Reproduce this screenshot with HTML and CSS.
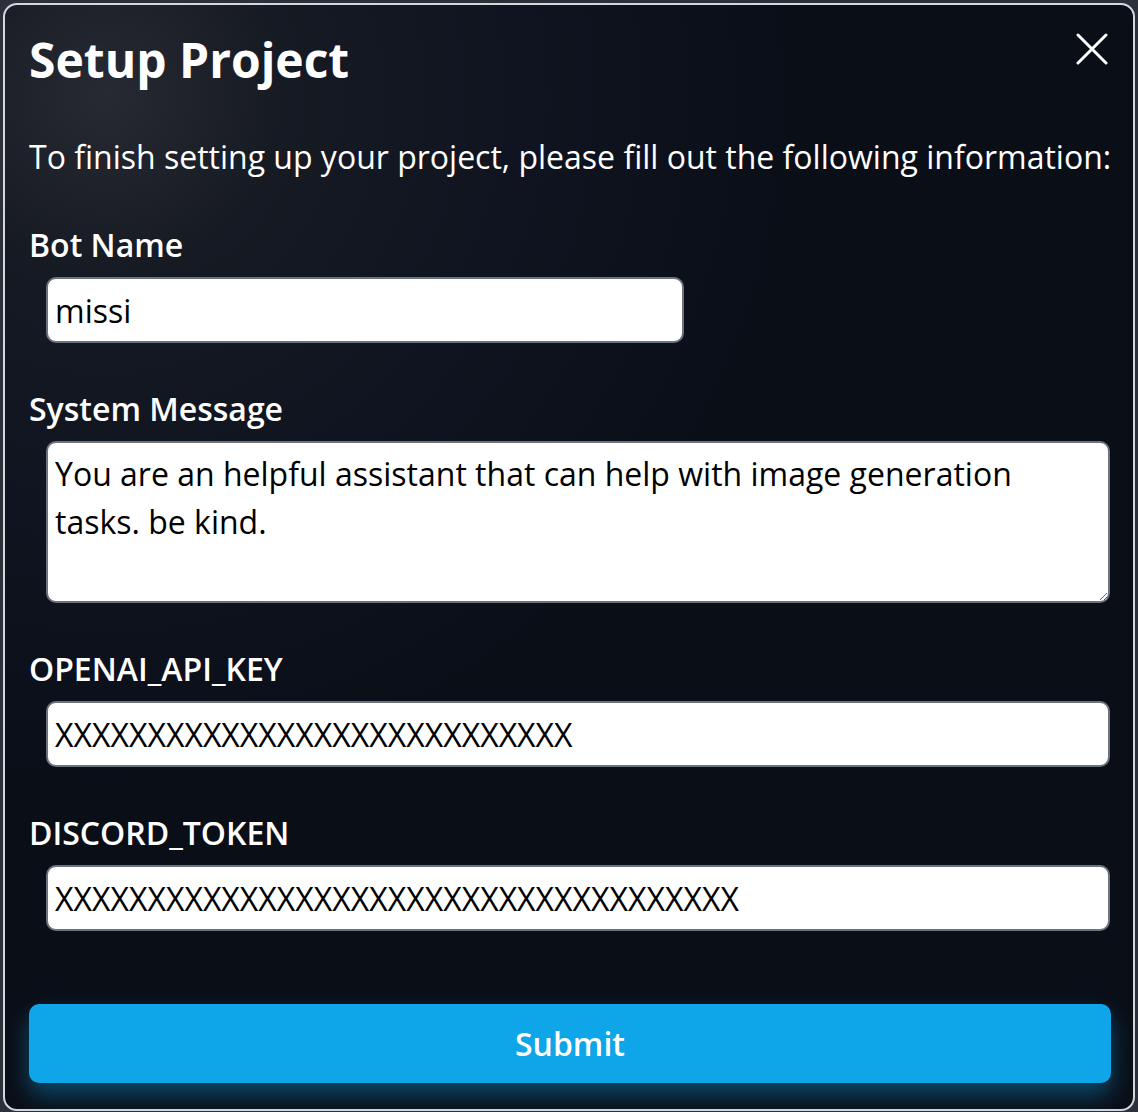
FILE: index.html
```html
<!DOCTYPE html>
<html lang="en">

<head>
    <meta charset="UTF-8">
    <meta name="viewport" content="width=device-width, initial-scale=1.0">
    <title>Setup Project</title>

    <link rel="stylesheet" href="styles.css">
</head>

<body>
    <div class="modal">
        <div class="modalHeader">
            <h1>Setup Project</h1>
            <div class="close">
                <svg width="32" height="32" viewBox="0 0 32 32">
                    <path d="M2 2 L30 30 M30 2 L2 30" stroke="#fff" stroke-width="3" stroke-linecap="round" />
                </svg>
            </div>
        </div>

        <p class="intro">To finish setting up your project, please fill out the following information:</p>

        <form class="setupForm">
            <div class="field">
                <label for="botName">Bot Name</label>
                <input class="short" type="text" id="botName" value="missi">
            </div>

            <div class="field">
                <label for="systemMessage">System Message</label>
                <textarea id="systemMessage">You are an helpful assistant that can help with image generation tasks. be kind.</textarea>
            </div>

            <div class="field">
                <label for="openaiKey">OPENAI_API_KEY</label>
                <input type="text" id="openaiKey" value="XXXXXXXXXXXXXXXXXXXXXXXXXXXX">
            </div>

            <div class="field">
                <label for="discordToken">DISCORD_TOKEN</label>
                <input type="text" id="discordToken" value="XXXXXXXXXXXXXXXXXXXXXXXXXXXXXXXXXXXXX">
            </div>

            <button type="button" class="submit">Submit</button>
        </form>
    </div>
</body>

</html>
```

FILE: styles.css
```css
body {
    margin: 0;
    background-color: #2b303a;
    font-family: "Open Sans", "Noto Sans", sans-serif;
    color: #fff;
}

.modal {
    box-sizing: border-box;
    width: 1132px;
    height: 1108px;
    margin: 3px;
    padding: 20px 22px 0 24px;
    border: 2px solid #d4d7dc;
    border-radius: 14px;
    background: radial-gradient(circle at 100px 90px, #272a33 0, #161a23 180px, #0f1420 420px, #0a0e17 700px);
}

.modalHeader {
    display: flex;
    justify-content: space-between;
    align-items: flex-start;
}

.modalHeader h1 {
    margin: 0;
    font-size: 48px;
    font-weight: 700;
    line-height: 70px;
}

.close {
    margin-top: 8px;
    margin-right: 3px;
    cursor: pointer;
}

.close svg {
    display: block;
}

.intro {
    margin: 42px 0 2px 0;
    font-size: 32px;
    line-height: 40px;
    white-space: nowrap;
}

.setupForm {
    display: flex;
    flex-direction: column;
}

.field {
    display: flex;
    flex-direction: column;
    align-items: flex-start;
}

.field label {
    margin-top: 46px;
    margin-bottom: 12px;
    font-size: 32px;
    font-weight: 600;
    line-height: 40px;
}

.field input,
.field textarea {
    box-sizing: border-box;
    width: 1064px;
    margin: 0 0 0 17px;
    border: 2px solid #6b7280;
    border-radius: 10px;
    background-color: #fff;
    font-family: "Open Sans", "Noto Sans", sans-serif;
    font-size: 32px;
    color: #000;
}

.field input {
    height: 66px;
    padding: 0 7px;
}

.field input.short {
    width: 638px;
}

.field textarea {
    height: 162px;
    padding: 7px 7px;
    line-height: 48px;
    resize: vertical;
}

.submit {
    margin-top: 73px;
    height: 79px;
    border: none;
    border-radius: 10px;
    background-color: #0ea5e9;
    box-shadow: 0 12px 24px rgba(14, 165, 233, 0.4);
    color: #fff;
    font-family: "Open Sans", "Noto Sans", sans-serif;
    font-size: 32px;
    font-weight: 600;
    cursor: pointer;
}
```
